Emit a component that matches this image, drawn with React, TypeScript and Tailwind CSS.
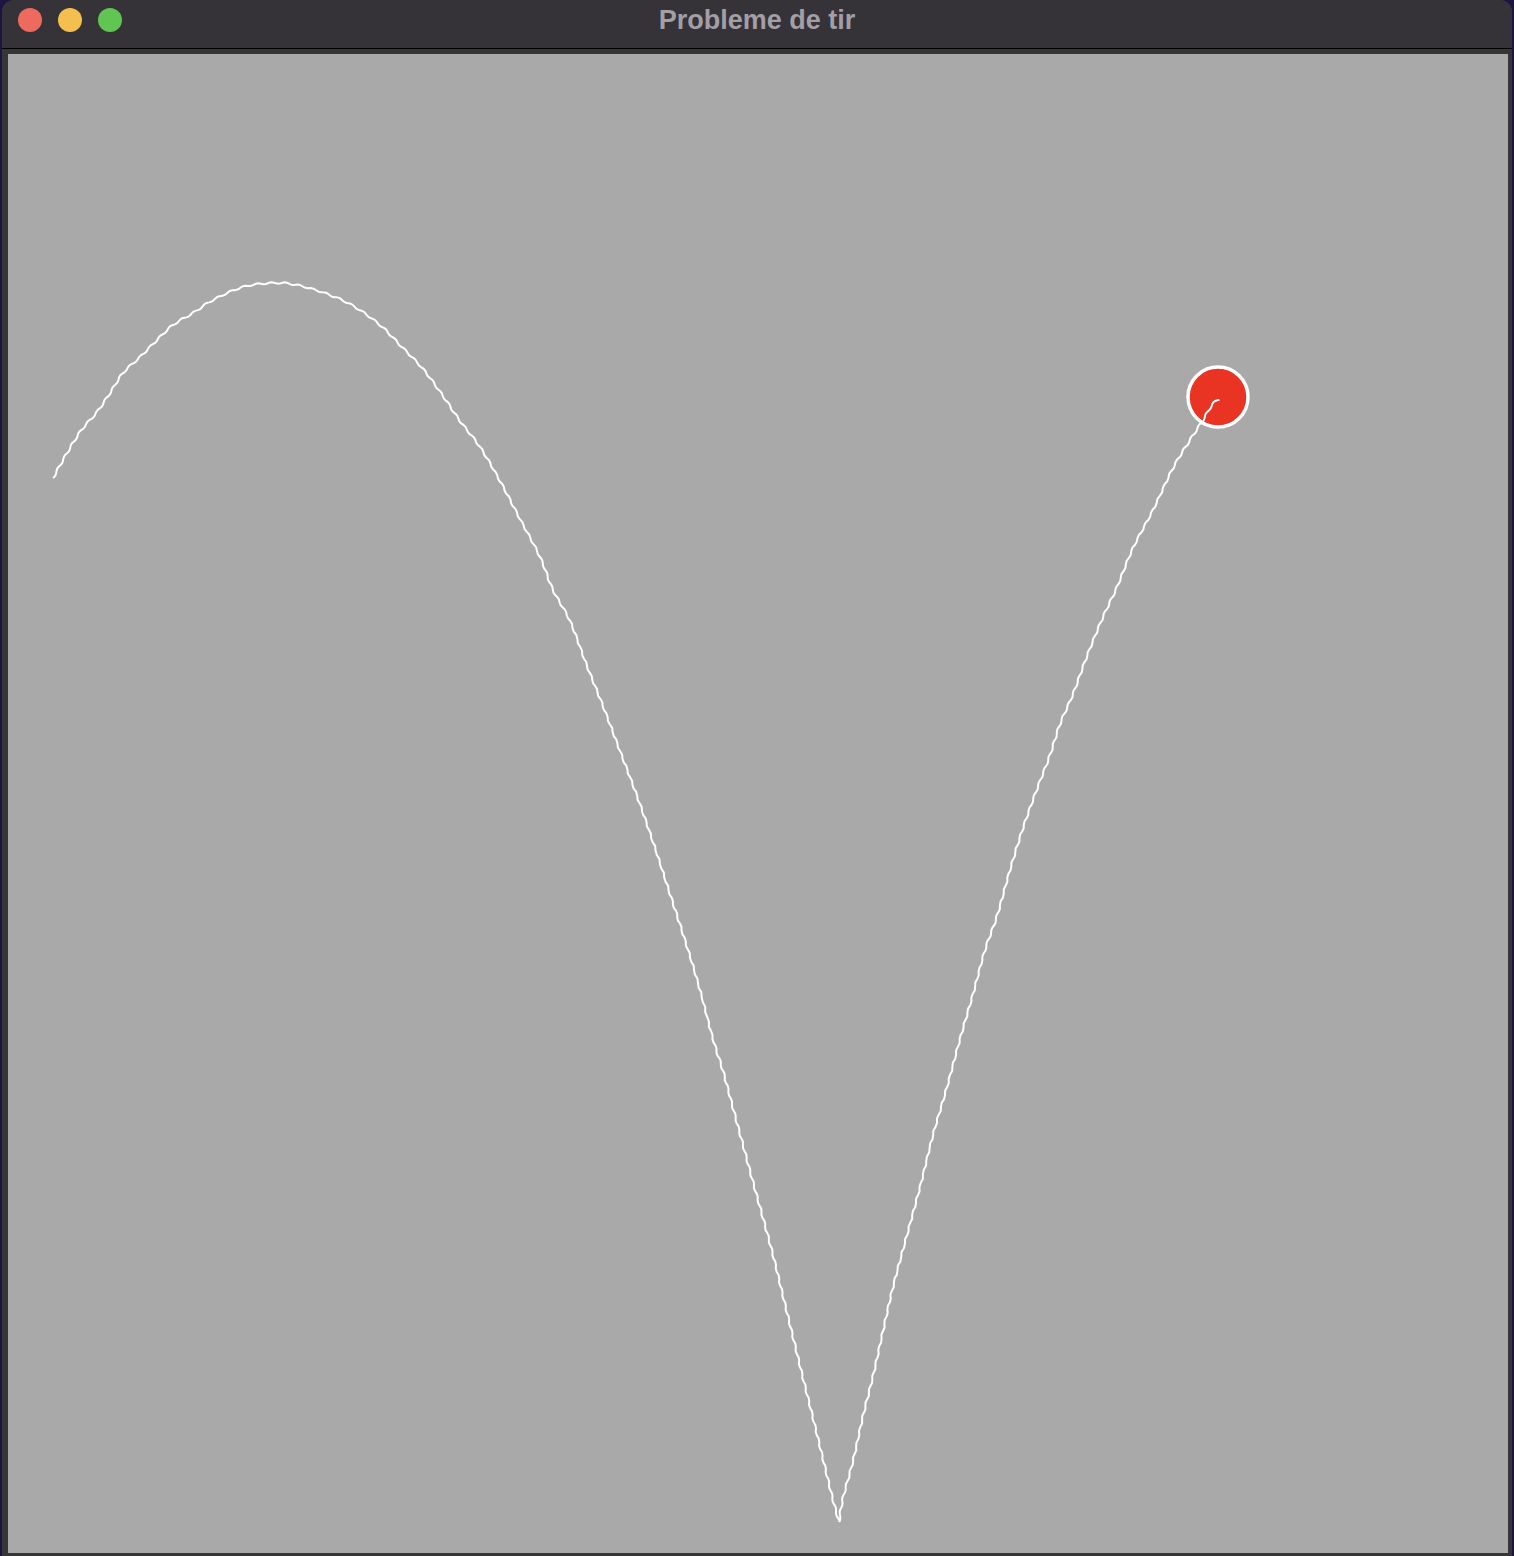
type Pt = [number, number];

// trajectory read off the reference, page coordinates
const leftArc: Pt[] = [
  [53, 478], [63, 460], [73, 443], [83, 428], [97, 412], [110, 393],
  [123, 373], [140, 357], [157, 340], [173, 325], [193, 313], [213, 300],
  [243, 287], [273, 283], [297, 285], [330, 295], [355, 307], [380, 325],
  [400, 345], [423, 369], [443, 396], [460, 421], [480, 447], [500, 481],
  [520, 519], [540, 557], [553, 590], [570, 621], [587, 666], [603, 706],
  [620, 751], [637, 796], [653, 842], [670, 894], [683, 934], [698, 983],
  [713, 1039], [723, 1071], [733, 1108], [743, 1145], [753, 1182],
  [763, 1218], [773, 1255], [783, 1296], [793, 1337], [803, 1378],
  [813, 1418], [823, 1459], [832, 1496], [839, 1522],
];

const rightArc: Pt[] = [
  [839, 1522], [843, 1498], [853, 1461], [863, 1416], [873, 1376],
  [883, 1331], [893, 1287], [907, 1235], [920, 1187], [933, 1135],
  [947, 1087], [960, 1039], [973, 994], [985, 950], [997, 916],
  [1010, 870], [1023, 828], [1037, 789], [1050, 755], [1060, 724],
  [1073, 694], [1087, 656], [1103, 617], [1117, 587], [1133, 548],
  [1153, 510], [1173, 468], [1190, 440], [1203, 420], [1212, 405],
  [1219, 399],
];

function sample(points: Pt[]): Pt[] {
  const out: Pt[] = [];
  for (let i = 0; i < points.length - 1; i++) {
    const p0 = points[Math.max(0, i - 1)];
    const p1 = points[i];
    const p2 = points[i + 1];
    const p3 = points[Math.min(points.length - 1, i + 2)];
    for (let k = 0; k < 12; k++) {
      const t = k / 12;
      const t2 = t * t;
      const t3 = t2 * t;
      const f = (a: number, b: number, c: number, d: number) =>
        0.5 *
        (2 * b + (-a + c) * t + (2 * a - 5 * b + 4 * c - d) * t2 +
          (-a + 3 * b - 3 * c + d) * t3);
      out.push([f(p0[0], p1[0], p2[0], p3[0]), f(p0[1], p1[1], p2[1], p3[1])]);
    }
  }
  out.push(points[points.length - 1]);
  return out;
}

// small wobble, the original is drawn from rounded dots
function wobble(pts: Pt[]): string {
  let s = 0;
  const res: string[] = [];
  for (let i = 0; i < pts.length; i++) {
    const prev = pts[Math.max(0, i - 1)];
    const next = pts[Math.min(pts.length - 1, i + 1)];
    if (i > 0) s += Math.hypot(pts[i][0] - prev[0], pts[i][1] - prev[1]);
    const dx = next[0] - prev[0];
    const dy = next[1] - prev[1];
    const len = Math.hypot(dx, dy) || 1;
    const a = 0.8 * Math.sin((2 * Math.PI * s) / 14);
    const x = pts[i][0] + (-dy / len) * a;
    const y = pts[i][1] + (dx / len) * a;
    res.push(`${x.toFixed(2)},${y.toFixed(2)}`);
  }
  return res.join(" ");
}

function TrafficLights() {
  return (
    <div className="flex items-center gap-[16px] pl-[16px]">
      <span className="w-[24px] h-[24px] rounded-full bg-[#ed6a5e]" />
      <span className="w-[24px] h-[24px] rounded-full bg-[#f5bf4f]" />
      <span className="w-[24px] h-[24px] rounded-full bg-[#61c554]" />
    </div>
  );
}

export default function App() {
  const left = wobble(sample(leftArc));
  const right = wobble(sample(rightArc));

  return (
    <div className="w-full h-[1556px] bg-[#1d1540] flex px-[2px]">
      <div className="flex-1 flex flex-col rounded-t-[12px] overflow-hidden bg-[#363636]">
        <div className="h-[40px] pb-[8px] shrink-0 bg-[#353238] border-b border-black grid grid-cols-[1fr_auto_1fr] items-center box-content">
          <TrafficLights />
          <span className="text-[27px] font-bold text-[#a29fa6] font-['Liberation_Sans',Arial,sans-serif] leading-none">
            Probleme de tir
          </span>
          <div />
        </div>
        <div className="flex-1 flex pl-[6px] pr-[4px] pt-[5px] pb-[3px]">
          <div className="flex-1 bg-[#a9a9a9]">
            <svg width="1500" height="1499" viewBox="8 54 1500 1499" className="block">
              <polyline points={left} fill="none" stroke="#ffffff" strokeWidth="2" strokeLinejoin="round" />
              <circle cx="1218" cy="397" r="30" fill="#e93323" stroke="#ffffff" strokeWidth="3.5" />
              <polyline points={right} fill="none" stroke="#ffffff" strokeWidth="2" strokeLinejoin="round" />
            </svg>
          </div>
        </div>
      </div>
    </div>
  );
}
